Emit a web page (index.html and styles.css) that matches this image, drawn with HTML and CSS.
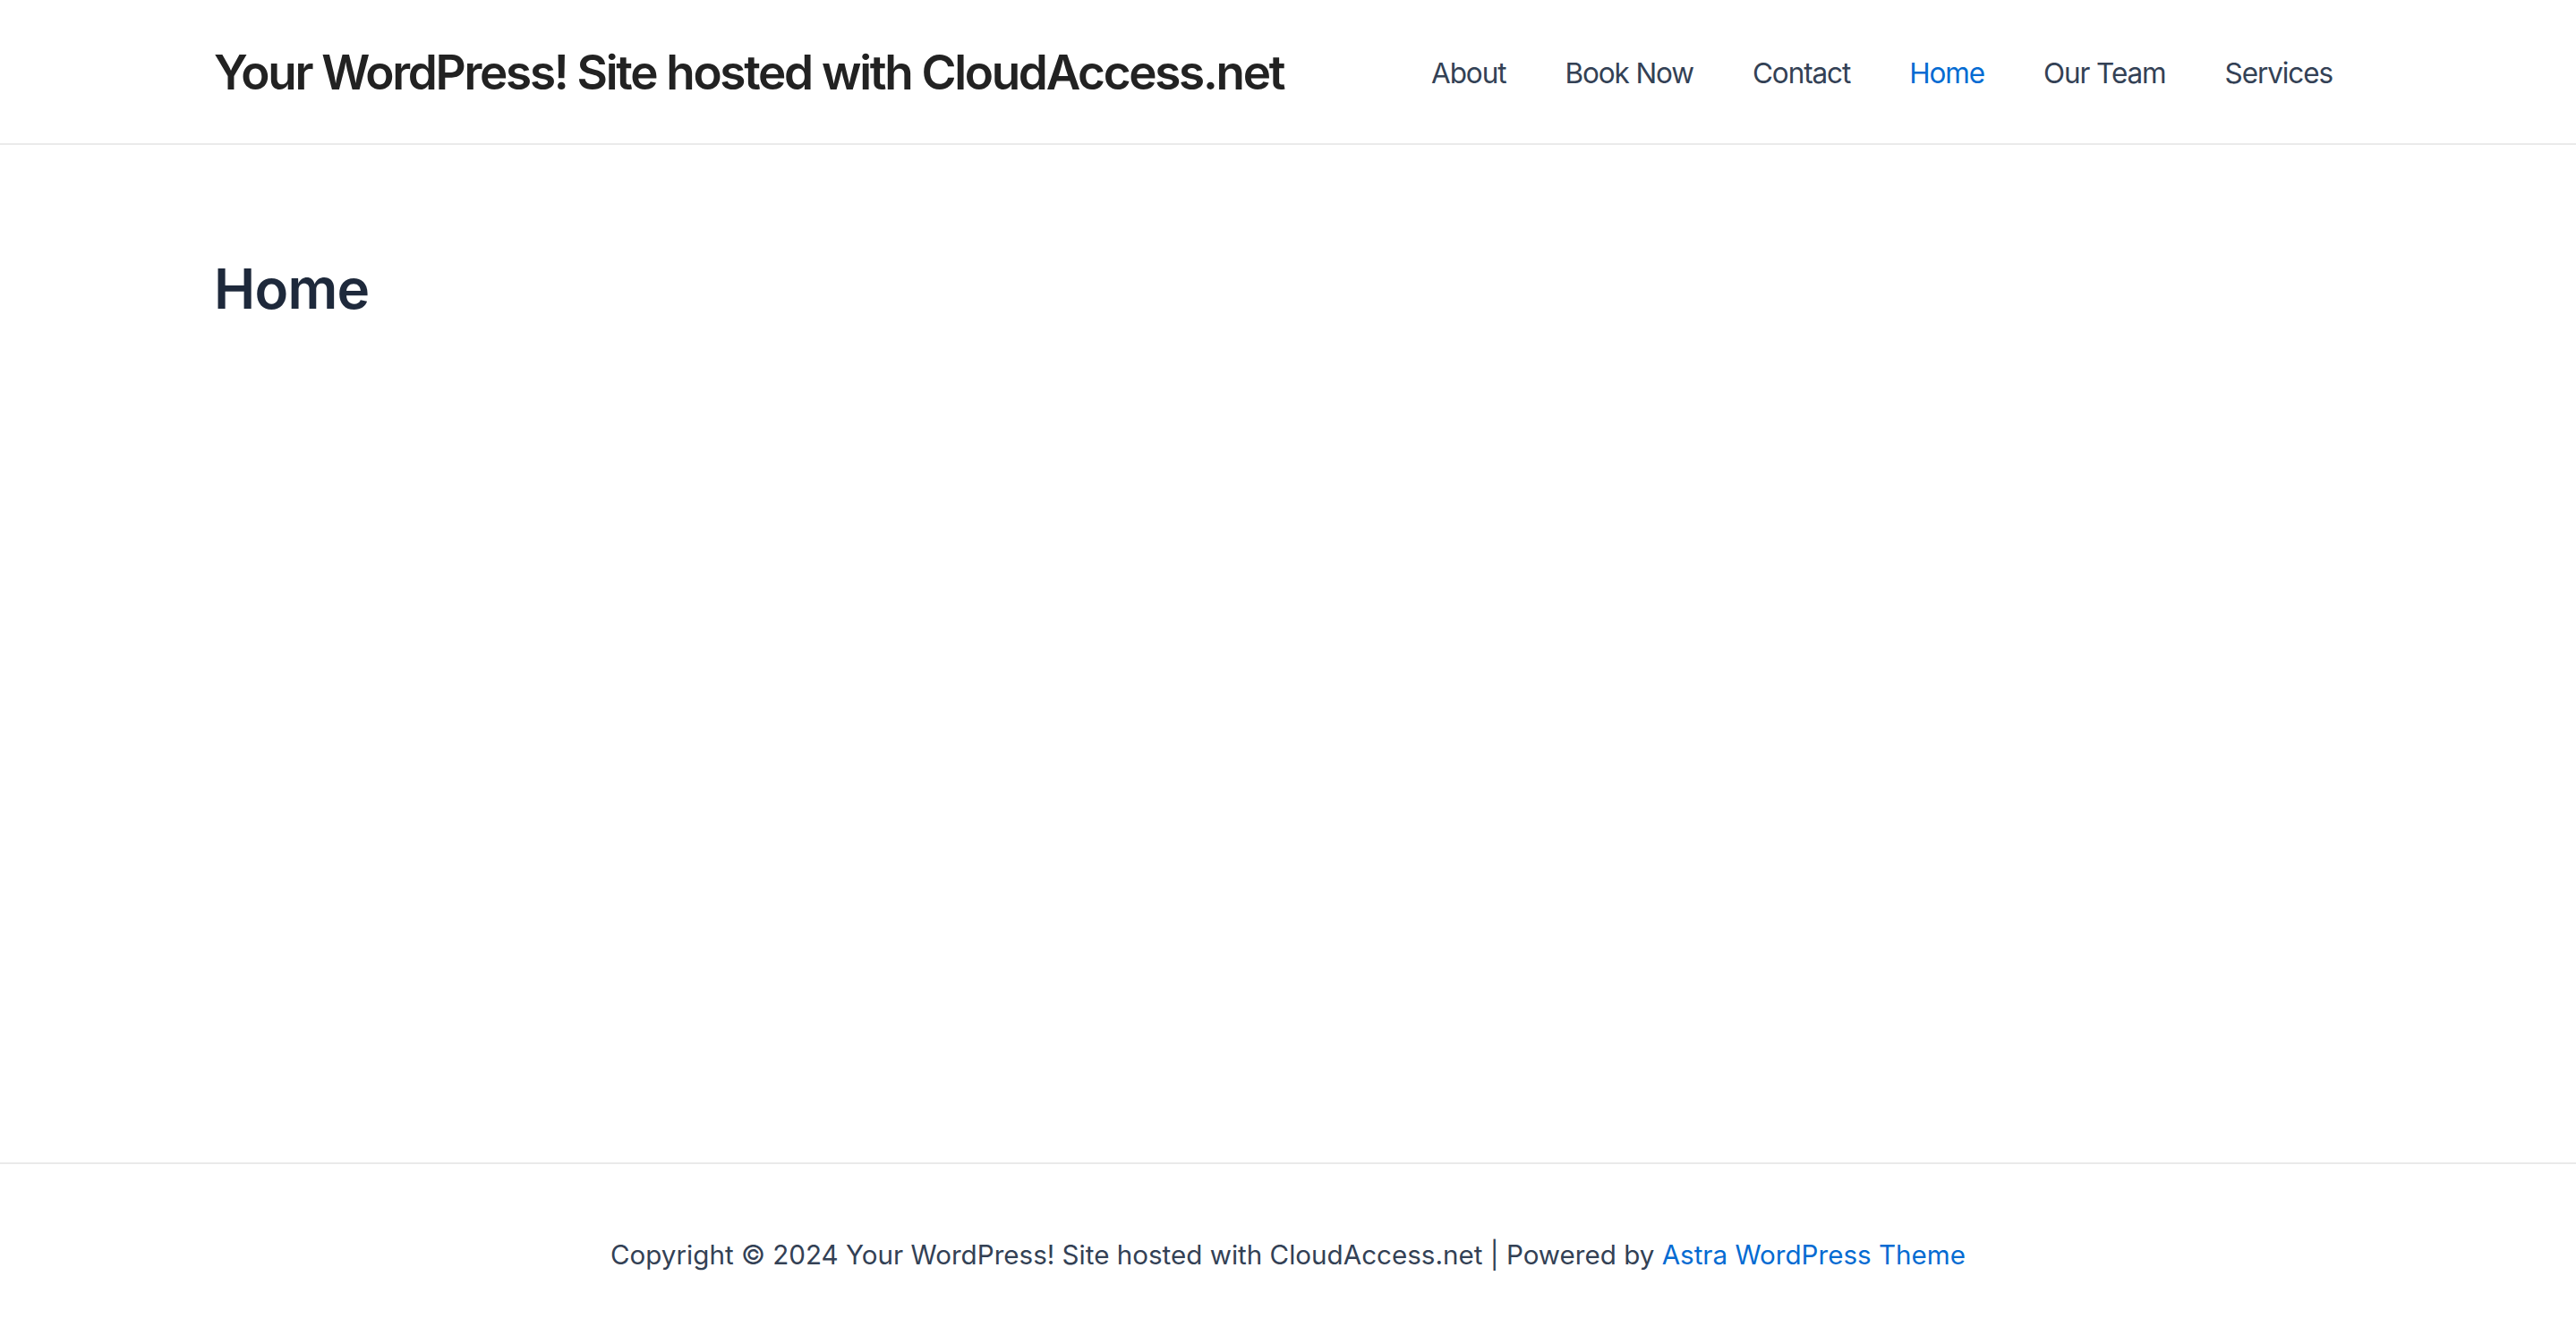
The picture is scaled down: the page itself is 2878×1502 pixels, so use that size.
FILE: index.html
```html
<!DOCTYPE html>
<html lang="en">
<head>
<meta charset="utf-8">
<title>Home – Your WordPress! Site hosted with CloudAccess.net</title>
<link rel="stylesheet" href="styles.css">
</head>
<body>
<header class="site-header">
  <div class="container header-inner">
    <a class="site-title" href="#">Your WordPress! Site hosted with CloudAccess.net</a>
    <nav class="main-nav">
      <a class="nav-link" href="#">About</a>
      <a class="nav-link" href="#">Book Now</a>
      <a class="nav-link" href="#">Contact</a>
      <a class="nav-link is-current" href="#">Home</a>
      <a class="nav-link" href="#">Our Team</a>
      <a class="nav-link" href="#">Services</a>
    </nav>
  </div>
</header>
<main class="site-content">
  <div class="container">
    <h1 class="entry-title">Home</h1>
  </div>
</main>
<footer class="site-footer">
  <p class="copyright">Copyright © 2024 Your WordPress! Site hosted with CloudAccess.net | Powered by <a class="footer-link" href="#">Astra WordPress Theme</a></p>
</footer>
</body>
</html>
```
FILE: styles.css
```css
html, body {
  margin: 0;
  padding: 0;
  background: #ffffff;
}
body {
  font-family: Inter, "Noto Sans", "Liberation Sans", sans-serif;
  color: #334155;
  display: flex;
  flex-direction: column;
  min-height: 1502px;
}
a {
  text-decoration: none;
}
.container {
  width: 2400px;
  margin: 0 auto;
}
.site-header {
  height: 160px;
  border-bottom: 2px solid #eaeaea;
  display: flex;
  align-items: center;
}
.header-inner {
  display: flex;
  align-items: center;
  justify-content: space-between;
  padding-top: 4px;
}
.site-title {
  font-size: 53px;
  font-weight: 600;
  color: #222222;
  letter-spacing: -2.3px;
  line-height: 1.2;
  white-space: nowrap;
  flex-shrink: 0;
}
.main-nav {
  display: flex;
  align-items: center;
  flex-shrink: 0;
}
.nav-link {
  font-size: 31.5px;
  color: #334155;
  padding: 0 33px;
  letter-spacing: -1.1px;
  line-height: 1.2;
  white-space: nowrap;
}
.nav-link.is-current {
  color: #046bd2;
}
.site-content {
  flex: 1;
  padding-top: 124px;
}
.entry-title {
  margin: 0;
  font-size: 62px;
  font-weight: 600;
  letter-spacing: -0.8px;
  line-height: 1.2;
  color: #1e293b;
}
.site-footer {
  border-top: 2px solid #eaeaea;
  padding: 78px 0 76px;
  text-align: center;
}
.copyright {
  margin: 0;
  font-size: 29.6px;
  line-height: 1.6;
  color: #334155;
}
.footer-link {
  color: #046bd2;
}
```
